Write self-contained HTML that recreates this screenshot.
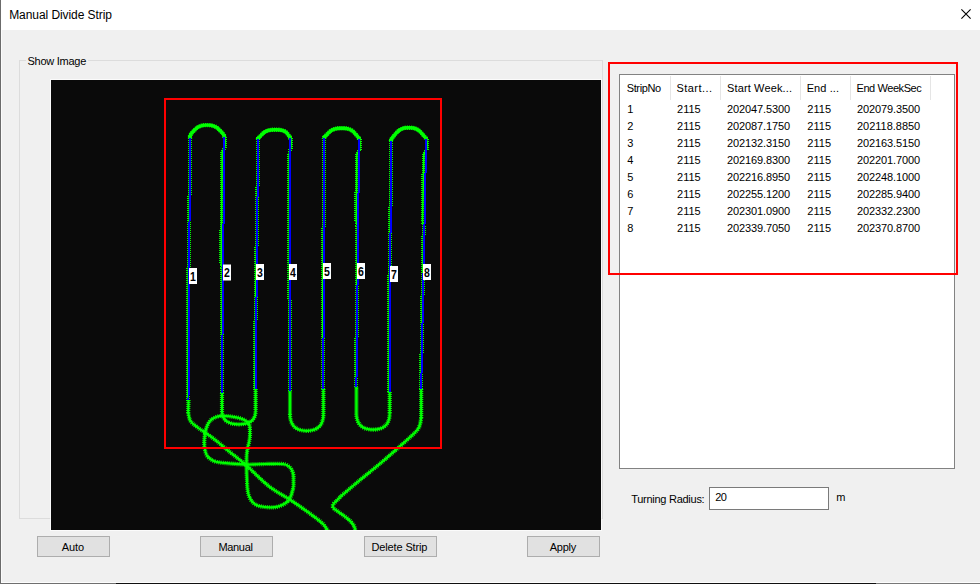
<!DOCTYPE html>
<html><head><meta charset="utf-8"><title>Manual Divide Strip</title>
<style>
html,body{margin:0;padding:0;}
body{width:980px;height:584px;position:relative;overflow:hidden;background:#f0f0f0;font-family:"Liberation Sans","DejaVu Sans",sans-serif;color:#000;}
.abs{position:absolute;}
#titlebar{left:0;top:0;width:980px;height:30px;background:#fff;}
#lb{left:0;top:0;width:1px;height:584px;background:#6b6b6b;}
#lb2{left:1px;top:0;width:1px;height:584px;background:#fff;opacity:.75;}
#bb0{left:1px;top:582px;width:979px;height:1px;background:#fff;opacity:.85;}
#bb1{left:0;top:583px;width:116px;height:1px;background:#6f6f6f;}
#bb2{left:116px;top:583px;width:760px;height:1px;background:#101010;}
#bb3{left:876px;top:583px;width:104px;height:1px;background:#777;}
#group{left:19px;top:60px;width:582px;height:457px;border:1px solid #dcdcdc;}
.img{position:absolute;left:51px;top:80px;outline:1px solid rgba(255,255,255,.7);}
.lab{font-family:"Liberation Sans",sans-serif;font-weight:bold;font-size:12.8px;text-anchor:middle;fill:#000;}
.btn{position:absolute;top:536px;width:71px;height:19px;background:#e1e1e1;border:1px solid #adadad;}
#list{left:619px;top:74px;width:334px;height:393px;background:#fff;border:1px solid #828282;}
.sep{position:absolute;top:76px;width:1px;height:24px;background:#e5e5e5;}
#input{left:709px;top:487px;width:118px;height:21px;background:#fff;border:1px solid #7a7a7a;}
#ann{left:608px;top:62px;width:346px;height:209px;border:2px solid #ff0000;}
.t{position:absolute;white-space:nowrap;line-height:20px;height:20px;}
</style></head><body>
<div id="titlebar" class="abs"></div>
<div id="group" class="abs"></div>
<svg class="img" width="550" height="450" viewBox="51 80 550 450">
<rect x="51" y="80" width="550" height="450" fill="#0a0a0a"/>
<path d="M190.0 136.0 L189.3 220.0 L188.3 280.0 L187.9 401.0 M224.3 135.0 L225.3 141.0 L224.9 147.0 L222.2 152.0 L221.2 264.0 L222.3 267.0 L221.7 394.0 M258.1 137.0 L257.1 220.0 L255.8 280.0 L255.0 390.0 M290.2 136.0 L291.2 142.0 L290.8 148.0 L289.2 153.0 L289.2 200.0 L289.3 203.0 L289.7 392.5 M324.0 136.2 L323.6 220.0 L322.8 280.0 L322.8 390.0 M359.1 137.1 L360.1 143.1 L359.7 149.1 L356.9 154.1 L356.2 222.0 L357.4 225.0 L356.1 388.5 M391.0 138.9 L390.4 220.0 L389.4 280.0 L389.1 393.0 M426.2 137.0 L427.2 143.0 L426.8 149.0 L423.9 154.0 L422.5 222.0 L423.7 225.0 L420.9 390.0" fill="none" stroke="#00ff00" stroke-width="4" stroke-dasharray="1 1" shape-rendering="crispEdges"/>
<path d="M188.5 400.0 L188.2 413.0 M222.0 393.0 L222.0 411.0 M255.6 389.0 L255.6 411.0 M290.0 391.5 L290.0 414.0 M323.4 389.0 L323.4 414.0 M356.4 387.5 L356.4 413.5 M389.7 392.0 L389.7 413.5 M421.2 389.0 L421.2 418.0 M222.0 411.0 C222.0 419.8 227.7 424.3 238.8 424.3 C249.9 424.3 255.6 419.8 255.6 411.0 M290.0 414.0 C290.0 425.1 295.7 430.8 306.7 430.8 C317.7 430.8 323.4 425.1 323.4 414.0 M356.4 413.5 C356.4 424.1 362.1 429.6 373.0 429.6 C384.0 429.6 389.7 424.1 389.7 413.5 M188.2 413.0 C188.6 414.3 189.0 418.7 190.5 421.0 C192.0 423.3 194.6 425.1 197.0 427.0 C199.4 428.9 201.8 430.2 205.0 432.5 C208.2 434.8 211.7 437.1 216.0 440.5 C220.3 443.9 226.0 448.9 231.0 453.0 C236.0 457.1 239.7 459.4 246.0 465.0 C252.3 470.6 261.3 480.3 269.0 486.3 C276.7 492.3 284.3 495.8 292.0 501.0 C299.7 506.2 309.8 513.4 315.0 517.3 C320.2 521.2 321.3 522.2 323.5 524.5 C325.7 526.8 327.2 529.9 328.0 531.0 M421.2 418.0 C420.9 419.3 420.5 423.6 419.5 426.0 C418.5 428.4 418.5 429.0 415.0 432.6 C411.5 436.2 404.2 442.5 398.7 447.4 C393.2 452.3 388.4 456.6 382.0 462.0 C375.6 467.4 367.0 474.2 360.0 480.0 C353.0 485.8 343.3 494.2 340.0 497.0 M340 497.3 L334.6 502.8 Q331 506 334.2 508.8 L346 517.3 Q352 522 354.3 526.5 L355.6 531 M248.8 423.6 C247.5 421.4 244.5 420.1 242.0 419.0 C239.5 417.9 236.8 417.5 234.0 417.0 C231.2 416.5 227.8 416.1 225.0 416.0 C222.2 415.9 220.0 415.7 217.5 416.5 C215.0 417.3 211.9 418.9 210.0 421.0 C208.1 423.1 206.9 426.3 206.0 429.0 C205.1 431.7 204.9 434.2 204.6 437.0 C204.3 439.8 204.1 443.0 204.4 446.0 C204.7 449.0 205.5 452.8 206.6 455.0 C207.7 457.2 209.3 458.3 211.0 459.5 C212.7 460.7 213.8 461.3 217.0 462.0 C220.2 462.7 225.2 463.1 230.0 463.5 C234.8 463.9 240.2 464.4 246.0 464.5 C251.8 464.6 258.8 464.1 265.0 464.0 C271.2 463.9 278.9 463.5 283.0 464.0 C287.1 464.5 287.8 465.5 289.5 467.0 C291.2 468.5 292.3 470.7 293.0 473.0 C293.7 475.3 293.5 478.3 293.5 481.0 C293.5 483.7 293.8 485.8 293.0 489.0 C292.2 492.2 291.0 497.2 289.0 500.0 C287.0 502.8 283.8 504.3 281.0 505.5 C278.2 506.7 275.7 507.3 272.0 507.4 C268.3 507.5 262.2 506.9 259.0 506.0 C255.8 505.1 254.2 503.7 252.5 502.0 C250.8 500.3 249.8 498.2 249.0 496.0 C248.2 493.8 247.8 491.5 247.5 489.0 C247.2 486.5 247.2 485.0 247.0 481.0 C246.8 477.0 246.5 469.8 246.5 465.0 C246.5 460.2 246.5 456.2 247.0 452.0 C247.5 447.8 249.0 443.3 249.5 440.0 C250.0 436.7 250.1 434.7 250.0 432.0 C249.9 429.3 250.1 425.8 248.8 423.6" fill="none" stroke="#00ff00" stroke-width="4.2" stroke-dasharray="1 1" stroke-linejoin="round"/>
<path d="M188.5 400.0 L188.2 413.0 M222.0 393.0 L222.0 411.0 M255.6 389.0 L255.6 411.0 M290.0 391.5 L290.0 414.0 M323.4 389.0 L323.4 414.0 M356.4 387.5 L356.4 413.5 M389.7 392.0 L389.7 413.5 M421.2 389.0 L421.2 418.0 M222.0 411.0 C222.0 419.8 227.7 424.3 238.8 424.3 C249.9 424.3 255.6 419.8 255.6 411.0 M290.0 414.0 C290.0 425.1 295.7 430.8 306.7 430.8 C317.7 430.8 323.4 425.1 323.4 414.0 M356.4 413.5 C356.4 424.1 362.1 429.6 373.0 429.6 C384.0 429.6 389.7 424.1 389.7 413.5 M188.2 413.0 C188.6 414.3 189.0 418.7 190.5 421.0 C192.0 423.3 194.6 425.1 197.0 427.0 C199.4 428.9 201.8 430.2 205.0 432.5 C208.2 434.8 211.7 437.1 216.0 440.5 C220.3 443.9 226.0 448.9 231.0 453.0 C236.0 457.1 239.7 459.4 246.0 465.0 C252.3 470.6 261.3 480.3 269.0 486.3 C276.7 492.3 284.3 495.8 292.0 501.0 C299.7 506.2 309.8 513.4 315.0 517.3 C320.2 521.2 321.3 522.2 323.5 524.5 C325.7 526.8 327.2 529.9 328.0 531.0 M421.2 418.0 C420.9 419.3 420.5 423.6 419.5 426.0 C418.5 428.4 418.5 429.0 415.0 432.6 C411.5 436.2 404.2 442.5 398.7 447.4 C393.2 452.3 388.4 456.6 382.0 462.0 C375.6 467.4 367.0 474.2 360.0 480.0 C353.0 485.8 343.3 494.2 340.0 497.0 M340 497.3 L334.6 502.8 Q331 506 334.2 508.8 L346 517.3 Q352 522 354.3 526.5 L355.6 531 M248.8 423.6 C247.5 421.4 244.5 420.1 242.0 419.0 C239.5 417.9 236.8 417.5 234.0 417.0 C231.2 416.5 227.8 416.1 225.0 416.0 C222.2 415.9 220.0 415.7 217.5 416.5 C215.0 417.3 211.9 418.9 210.0 421.0 C208.1 423.1 206.9 426.3 206.0 429.0 C205.1 431.7 204.9 434.2 204.6 437.0 C204.3 439.8 204.1 443.0 204.4 446.0 C204.7 449.0 205.5 452.8 206.6 455.0 C207.7 457.2 209.3 458.3 211.0 459.5 C212.7 460.7 213.8 461.3 217.0 462.0 C220.2 462.7 225.2 463.1 230.0 463.5 C234.8 463.9 240.2 464.4 246.0 464.5 C251.8 464.6 258.8 464.1 265.0 464.0 C271.2 463.9 278.9 463.5 283.0 464.0 C287.1 464.5 287.8 465.5 289.5 467.0 C291.2 468.5 292.3 470.7 293.0 473.0 C293.7 475.3 293.5 478.3 293.5 481.0 C293.5 483.7 293.8 485.8 293.0 489.0 C292.2 492.2 291.0 497.2 289.0 500.0 C287.0 502.8 283.8 504.3 281.0 505.5 C278.2 506.7 275.7 507.3 272.0 507.4 C268.3 507.5 262.2 506.9 259.0 506.0 C255.8 505.1 254.2 503.7 252.5 502.0 C250.8 500.3 249.8 498.2 249.0 496.0 C248.2 493.8 247.8 491.5 247.5 489.0 C247.2 486.5 247.2 485.0 247.0 481.0 C246.8 477.0 246.5 469.8 246.5 465.0 C246.5 460.2 246.5 456.2 247.0 452.0 C247.5 447.8 249.0 443.3 249.5 440.0 C250.0 436.7 250.1 434.7 250.0 432.0 C249.9 429.3 250.1 425.8 248.8 423.6" fill="none" stroke="#00ff00" stroke-width="2.2" stroke-linejoin="round"/>
<path d="M190.0 136.0 L189.3 220.0 L188.3 280.0 L187.9 401.0 M224.3 135.0 L225.3 141.0 L224.9 147.0 L222.2 152.0 L221.2 264.0 L222.3 267.0 L221.7 394.0 M258.1 137.0 L257.1 220.0 L255.8 280.0 L255.0 390.0 M290.2 136.0 L291.2 142.0 L290.8 148.0 L289.2 153.0 L289.2 200.0 L289.3 203.0 L289.7 392.5 M324.0 136.2 L323.6 220.0 L322.8 280.0 L322.8 390.0 M359.1 137.1 L360.1 143.1 L359.7 149.1 L356.9 154.1 L356.2 222.0 L357.4 225.0 L356.1 388.5 M391.0 138.9 L390.4 220.0 L389.4 280.0 L389.1 393.0 M426.2 137.0 L427.2 143.0 L426.8 149.0 L423.9 154.0 L422.5 222.0 L423.7 225.0 L420.9 390.0" fill="none" stroke="#00ff00" stroke-width="1.6"/>
<path d="M190.0 138.5 L190.0 136.4 Q190.0 134.8 193.9 130.7 L195.4 129.2 Q199.3 125.1 205.8 125.1 L208.2 125.1 Q214.7 125.1 218.7 129.2 L220.2 130.7 Q224.2 134.8 224.2 136.1 L224.3 138.0 M258.0 139.5 L258.0 138.8 Q258.0 138.3 261.7 134.7 L263.1 133.3 Q266.8 129.7 274.1 129.7 L276.9 129.7 Q284.2 129.7 286.8 132.9 L287.7 134.1 Q290.3 137.3 290.3 138.2 L290.4 139.5 M324.0 139.0 L324.0 138.0 Q324.0 137.3 327.9 133.5 L329.4 132.0 Q333.3 128.2 340.4 128.2 L343.1 128.2 Q350.2 128.2 353.9 132.2 L355.3 133.8 Q359.0 137.8 359.0 138.5 L359.1 139.5 M391.0 141.0 L391.0 140.0 Q391.0 139.3 395.1 134.4 L396.7 132.6 Q400.8 127.7 407.5 127.7 L410.0 127.7 Q416.7 127.7 420.7 132.2 L422.2 133.8 Q426.2 138.3 426.2 138.8 L426.2 139.5" fill="none" stroke="#00ff00" stroke-width="4.4" stroke-dasharray="1 1" stroke-linejoin="round"/>
<path d="M190.0 138.5 L190.0 136.4 Q190.0 134.8 193.9 130.7 L195.4 129.2 Q199.3 125.1 205.8 125.1 L208.2 125.1 Q214.7 125.1 218.7 129.2 L220.2 130.7 Q224.2 134.8 224.2 136.1 L224.3 138.0 M258.0 139.5 L258.0 138.8 Q258.0 138.3 261.7 134.7 L263.1 133.3 Q266.8 129.7 274.1 129.7 L276.9 129.7 Q284.2 129.7 286.8 132.9 L287.7 134.1 Q290.3 137.3 290.3 138.2 L290.4 139.5 M324.0 139.0 L324.0 138.0 Q324.0 137.3 327.9 133.5 L329.4 132.0 Q333.3 128.2 340.4 128.2 L343.1 128.2 Q350.2 128.2 353.9 132.2 L355.3 133.8 Q359.0 137.8 359.0 138.5 L359.1 139.5 M391.0 141.0 L391.0 140.0 Q391.0 139.3 395.1 134.4 L396.7 132.6 Q400.8 127.7 407.5 127.7 L410.0 127.7 Q416.7 127.7 420.7 132.2 L422.2 133.8 Q426.2 138.3 426.2 138.8 L426.2 139.5" fill="none" stroke="#00ff00" stroke-width="3.4" stroke-linejoin="round"/>
<path d="M190.0 138.0 L188.5 400.0 M224.3 137.0 L222.0 393.0 M258.1 139.0 L255.6 389.0 M290.2 138.0 L290.0 391.5 M324.0 138.2 L323.4 389.0 M359.1 139.1 L356.4 387.5 M391.0 140.9 L389.7 392.0 M426.2 139.0 L421.2 389.0" fill="none" stroke="#0000ff" stroke-width="2" shape-rendering="crispEdges"/>
<rect x="165" y="99" width="276" height="349" fill="none" stroke="#ff0000" stroke-width="2"/>
<rect x="189" y="268" width="8" height="16" fill="#fff"/>
<text transform="translate(193 280.7) scale(.82 1)" class="lab">1</text>
<rect x="223" y="264.5" width="8" height="16" fill="#fff"/>
<text transform="translate(227 277.2) scale(.82 1)" class="lab">2</text>
<rect x="256" y="264" width="8" height="16" fill="#fff"/>
<text transform="translate(260 276.7) scale(.82 1)" class="lab">3</text>
<rect x="289" y="264" width="8" height="16" fill="#fff"/>
<text transform="translate(293 276.7) scale(.82 1)" class="lab">4</text>
<rect x="323" y="263" width="8" height="16" fill="#fff"/>
<text transform="translate(327 275.7) scale(.82 1)" class="lab">5</text>
<rect x="357" y="263" width="8" height="16" fill="#fff"/>
<text transform="translate(361 275.7) scale(.82 1)" class="lab">6</text>
<rect x="390" y="266" width="8" height="16" fill="#fff"/>
<text transform="translate(394 278.7) scale(.82 1)" class="lab">7</text>
<rect x="423" y="264" width="8" height="16" fill="#fff"/>
<text transform="translate(427 276.7) scale(.82 1)" class="lab">8</text>
</svg>
<div class="btn" style="left:37px"></div>
<div class="btn" style="left:200px"></div>
<div class="btn" style="left:364px"></div>
<div class="btn" style="left:527px"></div>
<div id="list" class="abs"></div>
<div class="sep" style="left:670px"></div><div class="sep" style="left:720px"></div><div class="sep" style="left:800px"></div><div class="sep" style="left:850px"></div><div class="sep" style="left:930px"></div>
<div id="input" class="abs"></div>
<span id="title" class="t" style="left:9.2px;top:4.84px;font-size:12px;letter-spacing:-0.069px;">Manual Divide Strip</span>
<span id="grp" class="t" style="left:27.5px;top:51.19px;font-size:11px;letter-spacing:-0.262px;background:#f0f0f0;padding:0 2px;margin-left:-2px;">Show Image</span>
<span id="bauto" class="t" style="left:61.8px;top:537.19px;font-size:11px;letter-spacing:-0.114px;">Auto</span>
<span id="bman" class="t" style="left:218.4px;top:537.19px;font-size:11px;letter-spacing:-0.316px;">Manual</span>
<span id="bdel" class="t" style="left:371.5px;top:537.19px;font-size:11px;letter-spacing:-0.135px;">Delete Strip</span>
<span id="bapp" class="t" style="left:549.8px;top:537.19px;font-size:11px;letter-spacing:-0.283px;">Apply</span>
<span id="turn" class="t" style="left:631.2px;top:488.69px;font-size:11px;letter-spacing:-0.268px;">Turning Radius:</span>
<span id="v20" class="t" style="left:715.3px;top:487.19px;font-size:11px;letter-spacing:-0.550px;">20</span>
<span id="m" class="t" style="left:836.3px;top:487.19px;font-size:11px;letter-spacing:-0.972px;">m</span>
<span id="h1" class="t" style="left:626.7px;top:78.19px;font-size:11px;letter-spacing:-0.365px;">StripNo</span>
<span id="h2" class="t" style="left:676.5px;top:78.19px;font-size:11px;letter-spacing:0.442px;">Start...</span>
<span id="h3" class="t" style="left:727px;top:78.19px;font-size:11px;letter-spacing:0.135px;">Start Week...</span>
<span id="h4" class="t" style="left:806.7px;top:78.19px;font-size:11px;letter-spacing:0.084px;">End ...</span>
<span id="h5" class="t" style="left:856.5px;top:78.19px;font-size:11px;letter-spacing:-0.422px;">End WeekSec</span>
<span id="r0c0" class="t" style="left:627.2px;top:98.79px;font-size:11px;letter-spacing:0.000px;">1</span>
<span id="r0c1" class="t" style="left:677px;top:98.79px;font-size:11px;letter-spacing:0.015px;">2115</span>
<span id="r0c2" class="t" style="left:727px;top:98.79px;font-size:11px;letter-spacing:-0.123px;">202047.5300</span>
<span id="r0c3" class="t" style="left:807.3px;top:98.79px;font-size:11px;letter-spacing:0.015px;">2115</span>
<span id="r0c4" class="t" style="left:857px;top:98.79px;font-size:11px;letter-spacing:-0.103px;">202079.3500</span>
<span id="r1c0" class="t" style="left:627.2px;top:115.79px;font-size:11px;letter-spacing:0.000px;">2</span>
<span id="r1c1" class="t" style="left:677px;top:115.79px;font-size:11px;letter-spacing:0.015px;">2115</span>
<span id="r1c2" class="t" style="left:727px;top:115.79px;font-size:11px;letter-spacing:-0.123px;">202087.1750</span>
<span id="r1c3" class="t" style="left:807.3px;top:115.79px;font-size:11px;letter-spacing:0.015px;">2115</span>
<span id="r1c4" class="t" style="left:857px;top:115.79px;font-size:11px;letter-spacing:-0.022px;">202118.8850</span>
<span id="r2c0" class="t" style="left:627.2px;top:132.79px;font-size:11px;letter-spacing:0.000px;">3</span>
<span id="r2c1" class="t" style="left:677px;top:132.79px;font-size:11px;letter-spacing:0.015px;">2115</span>
<span id="r2c2" class="t" style="left:727px;top:132.79px;font-size:11px;letter-spacing:-0.123px;">202132.3150</span>
<span id="r2c3" class="t" style="left:807.3px;top:132.79px;font-size:11px;letter-spacing:0.015px;">2115</span>
<span id="r2c4" class="t" style="left:857px;top:132.79px;font-size:11px;letter-spacing:-0.103px;">202163.5150</span>
<span id="r3c0" class="t" style="left:627.2px;top:149.79px;font-size:11px;letter-spacing:0.000px;">4</span>
<span id="r3c1" class="t" style="left:677px;top:149.79px;font-size:11px;letter-spacing:0.015px;">2115</span>
<span id="r3c2" class="t" style="left:727px;top:149.79px;font-size:11px;letter-spacing:-0.123px;">202169.8300</span>
<span id="r3c3" class="t" style="left:807.3px;top:149.79px;font-size:11px;letter-spacing:0.015px;">2115</span>
<span id="r3c4" class="t" style="left:857px;top:149.79px;font-size:11px;letter-spacing:-0.103px;">202201.7000</span>
<span id="r4c0" class="t" style="left:627.2px;top:166.79px;font-size:11px;letter-spacing:0.000px;">5</span>
<span id="r4c1" class="t" style="left:677px;top:166.79px;font-size:11px;letter-spacing:0.015px;">2115</span>
<span id="r4c2" class="t" style="left:727px;top:166.79px;font-size:11px;letter-spacing:-0.123px;">202216.8950</span>
<span id="r4c3" class="t" style="left:807.3px;top:166.79px;font-size:11px;letter-spacing:0.015px;">2115</span>
<span id="r4c4" class="t" style="left:857px;top:166.79px;font-size:11px;letter-spacing:-0.103px;">202248.1000</span>
<span id="r5c0" class="t" style="left:627.2px;top:183.79px;font-size:11px;letter-spacing:0.000px;">6</span>
<span id="r5c1" class="t" style="left:677px;top:183.79px;font-size:11px;letter-spacing:0.015px;">2115</span>
<span id="r5c2" class="t" style="left:727px;top:183.79px;font-size:11px;letter-spacing:-0.123px;">202255.1200</span>
<span id="r5c3" class="t" style="left:807.3px;top:183.79px;font-size:11px;letter-spacing:0.015px;">2115</span>
<span id="r5c4" class="t" style="left:857px;top:183.79px;font-size:11px;letter-spacing:-0.103px;">202285.9400</span>
<span id="r6c0" class="t" style="left:627.2px;top:200.79px;font-size:11px;letter-spacing:0.000px;">7</span>
<span id="r6c1" class="t" style="left:677px;top:200.79px;font-size:11px;letter-spacing:0.015px;">2115</span>
<span id="r6c2" class="t" style="left:727px;top:200.79px;font-size:11px;letter-spacing:-0.123px;">202301.0900</span>
<span id="r6c3" class="t" style="left:807.3px;top:200.79px;font-size:11px;letter-spacing:0.015px;">2115</span>
<span id="r6c4" class="t" style="left:857px;top:200.79px;font-size:11px;letter-spacing:-0.103px;">202332.2300</span>
<span id="r7c0" class="t" style="left:627.2px;top:217.79px;font-size:11px;letter-spacing:0.000px;">8</span>
<span id="r7c1" class="t" style="left:677px;top:217.79px;font-size:11px;letter-spacing:0.015px;">2115</span>
<span id="r7c2" class="t" style="left:727px;top:217.79px;font-size:11px;letter-spacing:-0.123px;">202339.7050</span>
<span id="r7c3" class="t" style="left:807.3px;top:217.79px;font-size:11px;letter-spacing:0.015px;">2115</span>
<span id="r7c4" class="t" style="left:857px;top:217.79px;font-size:11px;letter-spacing:-0.103px;">202370.8700</span>
<div id="ann" class="abs"></div>
<svg class="abs" style="left:958px;top:6px" width="16" height="16" viewBox="0 0 16 16"><path d="M3.4 3.4 L12.6 12.6 M12.6 3.4 L3.4 12.6" stroke="#000" stroke-width="1.1" fill="none"/></svg>
<div id="lb" class="abs"></div><div id="lb2" class="abs"></div>
<div id="bb0" class="abs"></div><div id="bb1" class="abs"></div><div id="bb2" class="abs"></div><div id="bb3" class="abs"></div>
</body></html>
